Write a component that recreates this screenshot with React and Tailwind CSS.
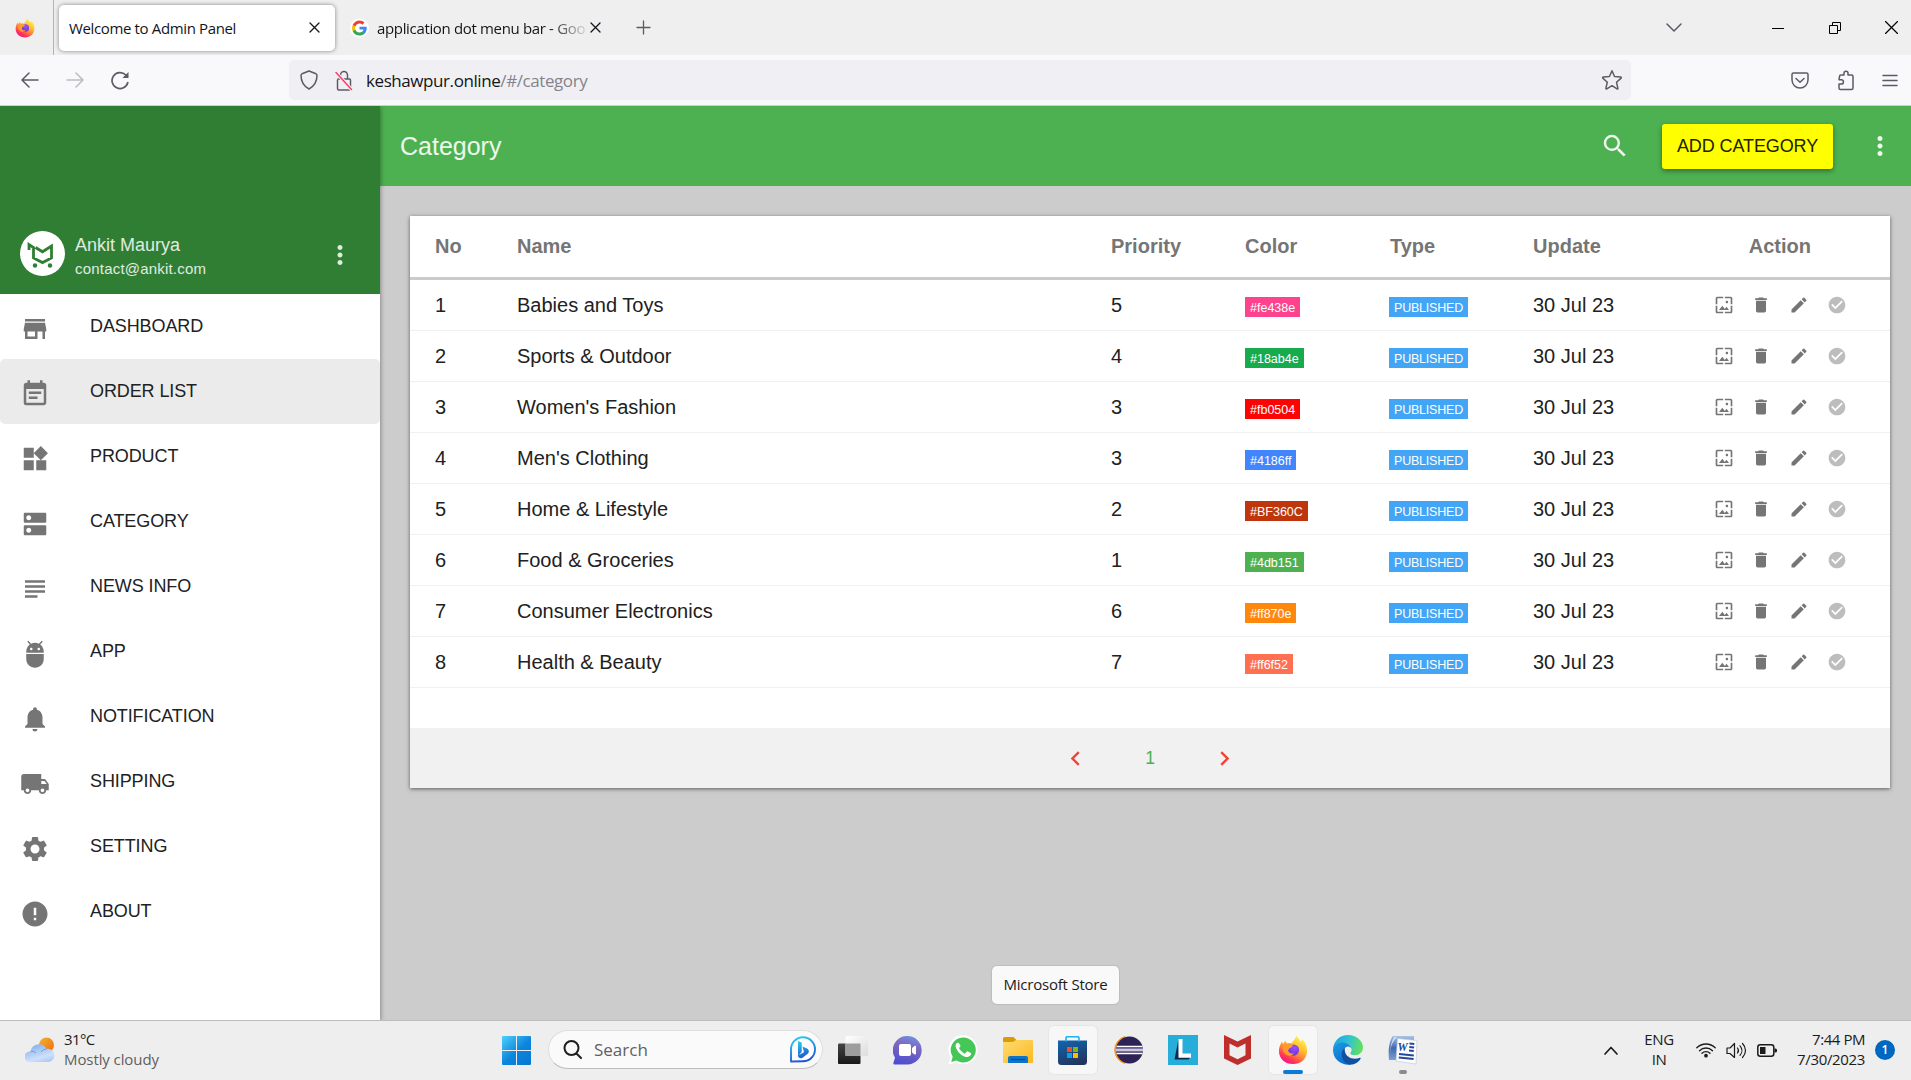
import React from "react";
import {
  MdStore, MdEventNote, MdWidgets, MdDns, MdSubject, MdAdb, MdNotifications,
  MdLocalShipping, MdSettings, MdError, MdWallpaper, MdDelete, MdEdit,
  MdCheckCircle, MdSearch, MdMoreVert, MdChevronLeft, MdChevronRight,
} from "react-icons/md";

const ui = "font-['Open_Sans','Noto_Sans',sans-serif]";

function FirefoxLogo({ size, id }) {
  return (
    <svg width={size} height={size} viewBox="0 0 32 32">
      <defs>
        <linearGradient id={id + "a"} x1="0.8" y1="0.05" x2="0.25" y2="1">
          <stop offset="0" stopColor="#fff44f" />
          <stop offset="0.35" stopColor="#ffc02e" />
          <stop offset="0.6" stopColor="#ff7a3a" />
          <stop offset="0.82" stopColor="#ff2f5e" />
          <stop offset="1" stopColor="#f0158f" />
        </linearGradient>
        <radialGradient id={id + "b"} cx="0.6" cy="0.3" r="0.8">
          <stop offset="0" stopColor="#a44bff" />
          <stop offset="1" stopColor="#5b36c9" />
        </radialGradient>
      </defs>
      <path fill={`url(#${id}a)`} d="M19.500 1c2.500 2 3.500 4 4.100 6 1.500-.5 2.200-1.500 2.400-2.500 3.500 3.500 5 8 5 12.500C31 25 24.500 31 16 31S1 25 1 17c0-4 1.500-7.500 3.500-10 .2 1.200.5 2 1 2.600C6.500 7.800 7.300 6.600 8 5.800c.3 1.400.9 2.400 2 3.100 1.500-.6 2.800-.5 4.200-.2C15.500 7 18.300 4.500 19.500 1z" />
      <circle cx="16.500" cy="16" r="6" fill={`url(#${id}b)`} />
      <path fill="#ff9a2c" d="M5.500 11c3-2.100 7.500-2 10 -.3.500 1.500-.5 2.500-3 3.300-.8.300-.8 1.500-1.800 2.300.3 2.500 3 4.200 6.300 3.200-1.500 3-6.500 3.500-9.500.5-2.500-2.500-3-6-2-9z" />
    </svg>
  );
}

function GoogleLogo() {
  return (
    <svg width="19" height="20" viewBox="0 0 24 24">
      <circle cx="12" cy="12" r="12" fill="#fff" />
      <g transform="translate(1.700 1.700) scale(0.86)">
        <path fill="#4285F4" d="M22.560 12.250c0-.78-.07-1.530-.2-2.250H12v4.260h5.920c-.26 1.370-1.040 2.530-2.210 3.310v2.770h3.570c2.080-1.920 3.280-4.740 3.280-8.090z" />
        <path fill="#34A853" d="M12 23c2.970 0 5.460-.98 7.280-2.660l-3.570-2.770c-.98.66-2.230 1.060-3.710 1.060-2.860 0-5.290-1.930-6.160-4.530H2.180v2.840C3.990 20.530 7.700 23 12 23z" />
        <path fill="#FBBC05" d="M5.840 14.090c-.22-.66-.35-1.360-.35-2.090s.13-1.430.35-2.090V7.070H2.180C1.430 8.550 1 10.220 1 12s.43 3.450 1.180 4.930l3.660-2.840z" />
        <path fill="#EA4335" d="M12 5.380c1.620 0 3.060.56 4.210 1.640l3.150-3.150C17.450 2.090 14.970 1 12 1 7.700 1 3.990 3.470 2.180 7.070l3.660 2.840c.87-2.600 3.300-4.530 6.160-4.530z" />
      </g>
    </svg>
  );
}

function Line({ w = 20, h = 20, box, d, color = "#5b5b66", sw = 1.5, className = "" }) {
  return (
    <svg width={w} height={h} viewBox={box || `0 0 ${w} ${h}`} fill="none" stroke={color} strokeWidth={sw} strokeLinecap="round" strokeLinejoin="round" className={`shrink-0 ${className}`}>
      <path d={d} />
    </svg>
  );
}

const Close = () => <Line w={11} h={11} d="M1 1l9 9M10 1l-9 9" color="#15141a" sw={1.300} />;

function TabBar() {
  return (
    <div className={`flex h-[55px] items-center bg-[#efefef] text-[15px] text-[#15141a] ${ui}`}>
      <div className="flex h-full w-[54px] shrink-0 items-center border-r border-[#b4b4b4] pl-[15px]">
        <FirefoxLogo size={20} id="tab" />
      </div>
      <div className="ml-[5px] flex h-[46px] w-[276px] shrink-0 items-center justify-between rounded-[5px] bg-white pl-[10px] pr-[15px] shadow-[0_0_4px_rgba(0,0,0,0.45)]">
        <span className="whitespace-nowrap pt-[2px] tracking-[-0.360px]">Welcome to Admin Panel</span>
        <Close />
      </div>
      <div className="ml-[15px] flex items-center">
        <GoogleLogo />
        <span className="ml-[8px] w-[211px] whitespace-nowrap pt-[2px] tracking-[-0.340px] [mask-image:linear-gradient(to_right,#000_82%,transparent_101%)]">application dot menu bar - Goo</span>
        <span className="ml-[2px]"><Close /></span>
      </div>
      <Line w={15} h={15} d="M7.500 1v13M1 7.500h13" className="ml-[35px]" sw={1.300} />
      <div className="ml-auto flex items-center pr-[13px]">
        <Line w={16} h={10} d="M1 1l7 7 7-7" className="mr-[90px]" />
        <Line w={12} h={12} d="M0 6.500h12" color="#000" sw={1} className="mr-[45px]" />
        <svg width="12" height="12" fill="none" stroke="#000" className="mr-[44px]">
          <path d="M.5 3.500h8v8h-8zM3.500 3.500v-3h8v8h-3" />
        </svg>
        <Line w={13} h={13} d="M.5.5l12 12M12.500.5l-12 12" color="#000" sw={1.200} />
      </div>
    </div>
  );
}

function NavBar() {
  return (
    <div className={`flex h-[51px] items-center border-b border-[#cfcfd3] bg-[#f9f9fb] ${ui}`}>
      <Line w={18} h={16} d="M17 8H1.500M8 1L1 8l7 7" className="ml-[21px]" />
      <Line w={18} h={16} d="M1 8h15.500M10 1l7 7-7 7" color="#bcbcc2" className="ml-[27px]" />
      <svg width="18" height="19" viewBox="0 0 18 19" fill="none" stroke="#5b5b66" strokeWidth="1.700" strokeLinecap="round" className="ml-[27px]">
        <path d="M16.800 11.500A8 8 0 1 1 14.800 4" />
        <path d="M17.500 1v6h-6z" fill="#5b5b66" stroke="none" />
      </svg>
      <div className="ml-[160px] flex h-10 w-[1342px] items-center rounded-[5px] bg-[#f0f0f4] pl-[11px] pr-[8px]">
        <Line w={18} h={20} d="M9 1l7 2.800c.6.300 1 .8 1 1.500 0 6-2 10.500-8 13.700-6-3.200-8-7.700-8-13.700 0-.7.400-1.200 1-1.500z" />
        <svg width="18" height="21" viewBox="0 0 18 21" fill="none" stroke="#5b5b66" strokeWidth="1.500" strokeLinecap="round" className="ml-[17px]">
          <path d="M5.500 9V5a3.500 3.500 0 0 1 7 0v4M3 9h11.500a1 1 0 0 1 1 1v9a1 1 0 0 1-1 1H4a1.500 1.500 0 0 1-1.500-1.500V10" />
          <path d="M1 2.500l15.500 17" stroke="#f0f0f4" strokeWidth="3.400" />
          <path d="M1 2.500l15.500 17" stroke="#ff3b6b" />
        </svg>
        <span className="ml-[13px] whitespace-nowrap pt-[2px] text-[17px] tracking-[-0.420px] text-[#15141a]">
          keshawpur.online<span className="text-[#84838c]">/#/category</span>
        </span>
        <Line w={22} h={22} d="M11 1.800l2.500 5.700 6.200.6c.6.100.8.600.4 1l-4.600 4.100 1.400 6.100c.1.500-.4.900-.9.600L11 16.700l-5.200 3.200c-.4.300-1-.1-.9-.6l1.400-6.100L1.800 9.100c-.4-.4-.2-1 .4-1l6.200-.6z" className="ml-auto" />
      </div>
      <div className="ml-auto flex items-center gap-[27.500px] pr-[13px]">
        <Line w={18} h={17} d="M2.500 1h13A1.500 1.500 0 0 1 17 2.500V8a8 8 0 0 1-16 0V2.500A1.500 1.500 0 0 1 2.500 1zM5 6.500l4 3.800 4-3.800" />
        <Line w={18} h={21} d="M2.500 7V6.500A1.500 1.500 0 0 1 4 5h3V3.200a2 2 0 0 1 4 0V5h3.500A1.500 1.500 0 0 1 16 6.500V18a1.500 1.500 0 0 1-1.500 1.500H3.500A1.500 1.500 0 0 1 2 18v-4h2.300a2.100 2.100 0 0 0 0-4.200H2z" />
        <Line w={16} h={13} d="M1 1.500h14M1 6.500h14M1 11.500h14" />
      </div>
    </div>
  );
}

const menu = [
  ["DASHBOARD", MdStore], ["ORDER LIST", MdEventNote], ["PRODUCT", MdWidgets],
  ["CATEGORY", MdDns], ["NEWS INFO", MdSubject], ["APP", MdAdb],
  ["NOTIFICATION", MdNotifications], ["SHIPPING", MdLocalShipping],
  ["SETTING", MdSettings], ["ABOUT", MdError],
];

function Sidebar() {
  return (
    <aside className="relative z-10 w-[380px] shrink-0 bg-white shadow-[0_1px_5px_rgba(0,0,0,0.45)]">
      <div className="flex h-[188px] items-end bg-[#2f7e33] pb-[13px] pl-5 text-white/85">
        <svg width="45" height="45" viewBox="0 0 45 45" className="mb-[5px]">
          <circle cx="22.500" cy="22.500" r="22.500" fill="#fff" />
          <g fill="none" stroke="#2f7e33" strokeWidth="2.800">
            <path d="M9 19v-5.500l4.500 3v10.500l9 4.600 9-4.600V15l-9 5.800-7-4.300" />
          </g>
          <circle cx="15" cy="34.500" r="2.200" fill="#2f7e33" />
          <circle cx="30" cy="34.500" r="2.200" fill="#2f7e33" />
        </svg>
        <div className="ml-[10px] flex flex-col">
          <span className="text-[18px] leading-6">Ankit Maurya</span>
          <span className="text-[15px] leading-6 tracking-[0.200px]">contact@ankit.com</span>
        </div>
        <MdMoreVert size={30} className="mb-[11px] ml-auto mr-[25px]" />
      </div>
      <nav>
        {menu.map(([label, Icon]) => (
          <div key={label} className={label === "ORDER LIST" ? "flex h-[65px] items-center rounded-[5px] bg-[#ebebeb] pl-5" : "flex h-[65px] items-center pl-5"}>
            <Icon size={30} color="#757575" className="relative top-[2.500px]" />
            <span className="ml-10 text-[18px] tracking-[-0.100px] text-[#212121]">{label}</span>
          </div>
        ))}
      </nav>
    </aside>
  );
}

const rows = [
  ["Babies and Toys", 5, "#fe438e", "bg-[#fe438e]"],
  ["Sports & Outdoor", 4, "#18ab4e", "bg-[#18ab4e]"],
  ["Women's Fashion", 3, "#fb0504", "bg-[#fb0504]"],
  ["Men's Clothing", 3, "#4186ff", "bg-[#4186ff]"],
  ["Home & Lifestyle", 2, "#BF360C", "bg-[#BF360C]"],
  ["Food & Groceries", 1, "#4db151", "bg-[#4db151]"],
  ["Consumer Electronics", 6, "#ff870e", "bg-[#ff870e]"],
  ["Health & Beauty", 7, "#ff6f52", "bg-[#ff6f52]"],
];
const cols = "grid grid-cols-[82px_594px_134px_145px_143px_1fr] items-center pl-[25px]";

function Badge({ children, className }) {
  return <span className={`inline-flex h-5 items-center px-[5px] pt-[3px] text-[12.500px] leading-none text-white ${className}`}>{children}</span>;
}

function CategoryTable() {
  return (
    <section className="ml-[30px] mt-[30px] w-[1480px] bg-white text-[20px] text-[#212121] shadow-[0_1px_4px_rgba(0,0,0,0.55)]">
      <div className={`${cols} h-16 border-b-[3px] border-[#cbcbcb] pb-[2px] font-bold text-[#757575]`}>
        <span>No</span><span>Name</span><span>Priority</span><span>Color</span><span>Type</span>
        <div className="flex"><span>Update</span><span className="ml-[148px]">Action</span></div>
      </div>
      {rows.map(([name, priority, color, bg], i) => (
        <div key={name} className={`${cols} h-[51px] border-b border-[#f1f1f1]`}>
          <span>{i + 1}</span><span>{name}</span><span>{priority}</span>
          <div className="flex pt-[4px]"><Badge className={bg}>{color}</Badge></div>
          <div className="-ml-px flex pt-[4px]"><Badge className="bg-[#42a5f5] tracking-[-0.210px]">PUBLISHED</Badge></div>
          <div className="flex items-center">
            <span className="whitespace-nowrap">30 Jul 23</span>
            <div className="ml-auto mr-[43.500px] flex gap-[17.600px] text-[#757575]">
              <MdWallpaper size={20} /><MdDelete size={20} /><MdEdit size={20} /><MdCheckCircle size={20} color="#bdbdbd" />
            </div>
          </div>
        </div>
      ))}
      <div className="h-10" />
      <div className="flex h-[60px] items-center justify-center bg-[#f1f1f1] text-[17.500px]">
        <MdChevronLeft size={29} color="#f44336" />
        <span className="mx-[55px] text-[#4caf50]">1</span>
        <MdChevronRight size={29} color="#f44336" />
      </div>
    </section>
  );
}

function TaskCell({ children, active, mark }) {
  return (
    <div className="flex w-[55px] justify-center">
      <div className={active ? "relative flex size-12 items-center justify-center rounded-[5px] bg-[#f7f7f7] shadow-[0_0_1px_1px_#e6e6e6]" : "relative flex size-12 items-center justify-center"}>
        {children}
        {mark && <span className={`absolute bottom-0 h-1 rounded-full ${mark}`} />}
      </div>
    </div>
  );
}

function Taskbar() {
  return (
    <footer className={`flex h-[60px] items-center border-t border-[#bdbdbd] bg-[#eeeeee] pb-px text-[15px] text-[#1b1b1b] ${ui}`}>
      <div className="flex w-[502px] items-center pl-[25px]">
        <svg width="30" height="26" viewBox="0 0 30 26">
          <defs>
            <linearGradient id="sun" x1="0" y1="0" x2="1" y2="1"><stop stopColor="#efb52e" /><stop offset="1" stopColor="#f26a12" /></linearGradient>
            <linearGradient id="cloud" x1="0.300" y1="0" x2="0.800" y2="1"><stop stopColor="#83b2f0" /><stop offset="0.700" stopColor="#cfe0fa" /><stop offset="1" stopColor="#a9c8f5" /></linearGradient>
          </defs>
          <circle cx="21.500" cy="8" r="7.500" fill="url(#sun)" />
          <path d="M5 25a5 5 0 0 1-.5-10.500h1A8.500 8.500 0 0 1 21.500 12 6.500 6.500 0 0 1 24 25z" fill="url(#cloud)" />
          <path d="M5.500 14.500c2-.5 4 0 5.500 1.500M16 15a6.500 6.500 0 0 1 5.500-3" fill="none" stroke="#6d9ee8" strokeWidth="1" />
        </svg>
        <div className="ml-[9px] flex flex-col pb-[3px] leading-5">
          <span className="tracking-[-0.600px]">31°C</span>
          <span className="tracking-[-0.090px] text-[#5f5f5f]">Mostly cloudy</span>
        </div>
      </div>
      <svg width="29" height="29" viewBox="0 0 29 29" className="mt-px">
        <defs><linearGradient id="win" x1="0" y1="0" x2="0.900" y2="1"><stop stopColor="#4fd0fb" /><stop offset="0.550" stopColor="#0c86dd" /><stop offset="1" stopColor="#0878d2" /></linearGradient></defs>
        <path fill="url(#win)" d="M0 1a1 1 0 0 1 1-1h13v14H0zM15 0h13a1 1 0 0 1 1 1v13H15zM0 15h14v14H1a1 1 0 0 1-1-1zM15 15h14v13a1 1 0 0 1-1 1H15z" />
      </svg>
      <div className="mb-px ml-[17px] flex h-[39px] w-[275px] items-center rounded-full border border-[#dedede] border-b-[#bdbdbd] bg-[#fafafa] pl-[14px] pr-[6px]">
        <Line w={19} h={19} d="M8.500 1a7 7 0 1 1 0 14a7 7 0 1 1 0-14M13.500 13.500l4.500 4.500" color="#1f1f1f" sw={2} />
        <span className="ml-[12px] text-[17px] text-[#616161]">Search</span>
        <svg width="27" height="27" viewBox="0 0 27 27" className="ml-auto">
          <defs><linearGradient id="bing" x1="0.300" y1="0" x2="0.600" y2="1"><stop stopColor="#28c8f0" /><stop offset="1" stopColor="#2350cf" /></linearGradient></defs>
          <path d="M2 25.500V13.500A12 12 0 1 1 14 25.300z" fill="#fff" stroke="url(#bing)" strokeWidth="1.900" strokeLinejoin="round" />
          <path fill="url(#bing)" d="M9 5l3.700 1.500V16l-3.700 4zM13.500 10.500l4.500 2c2 .9 2.500 3.500 1 5l-5.500 4.200c-1.800 1.300-4.500.3-4.500-2.200l6-3.300z" />
        </svg>
      </div>
      <div className="ml-[2px] flex items-center">
        <TaskCell>
          <svg width="30" height="28" viewBox="0 0 30 28">
            <defs>
              <linearGradient id="tv1" x1="0" y1="0" x2="0" y2="1"><stop stopColor="#444" /><stop offset="1" stopColor="#181818" /></linearGradient>
              <linearGradient id="tv2" x1="0" y1="0" x2="1" y2="1"><stop stopColor="#fff" /><stop offset="1" stopColor="#dcdcdc" /></linearGradient>
            </defs>
            <rect y="7.500" width="22.500" height="20.500" rx="1" fill="url(#tv1)" />
            <rect x="7.500" width="22.500" height="20" rx="1" fill="url(#tv2)" />
            <path d="M7.500 7.500h15V20h-15z" fill="#9d9d9d" />
          </svg>
        </TaskCell>
        <TaskCell>
          <svg width="29" height="29" viewBox="0 0 29 29">
            <defs><linearGradient id="chat" x1="0.800" y1="0" x2="0.500" y2="1"><stop stopColor="#6f93e8" /><stop offset="0.400" stopColor="#7f68bd" /><stop offset="1" stopColor="#4f50d0" /></linearGradient></defs>
            <path d="M14.500 0a14.200 14.200 0 0 1 0 28.400H2c-1.500 0-2-1-1.400-2.200l1.400-4.500A14.200 14.200 0 0 1 14.500 0z" fill="url(#chat)" />
            <rect x="6" y="8" width="12" height="12" rx="2" fill="#fff" />
            <path d="M19 12l2.500-2c.6-.4 1.500 0 1.500.8v6.800c0 .8-.9 1.200-1.500.8l-2.500-2z" fill="#fff" />
          </svg>
        </TaskCell>
        <TaskCell>
          <svg width="30" height="30" viewBox="0 0 30 30">
            <path d="M15 .3A14.500 14.500 0 1 1 8 27.500L.5 29.700l2-7.400A14.500 14.500 0 0 1 15 .3z" fill="#fff" />
            <path d="M15 2.500a12.500 12.500 0 1 1-6.500 23L3.200 27l1.500-5.300A12.500 12.500 0 0 1 15 2.500z" fill="#45c757" />
            <path transform="translate(0.500 0)" fill="#fff" d="M10.700 8.500c-.4-.8-1-.8-1.500-.7-3 1.400-2.300 4.600-.5 7.400 2.500 3.900 6.500 7 10.400 6.800 1.900-.2 3.600-1.500 3.500-3.400 0-.4-.3-.6-.6-.8l-2.800-1.400c-.5-.2-.8 0-1.100.4l-1.200 1.500c-.3.300-.6.300-1 .1-2.200-1-4-2.700-5.200-4.800-.2-.4-.1-.6.1-.9l1-1.200c.2-.3.200-.6.100-.9z" />
          </svg>
        </TaskCell>
        <TaskCell>
          <svg width="30" height="27" viewBox="0 0 30 27">
            <defs><linearGradient id="fold" x1="0" y1="0" x2="1" y2="1"><stop stopColor="#ffdc72" /><stop offset="1" stopColor="#fbb91e" /></linearGradient></defs>
            <path d="M0 1.500A1.500 1.500 0 0 1 1.500 0h8c1 0 1.500.4 2 1l2 2V8H0z" fill="#dd9a06" />
            <path d="M0 5h10l3-2h16a1 1 0 0 1 1 1v21a1 1 0 0 1-1 1H1a1 1 0 0 1-1-1z" fill="url(#fold)" />
            <path d="M5 26v-5a2 2 0 0 1 2-2h16a2 2 0 0 1 2 2v5z" fill="#0b75c9" />
            <path d="M8 22.500h14" stroke="#06488f" strokeWidth="1.200" />
          </svg>
        </TaskCell>
        <TaskCell active>
          <svg width="29" height="29" viewBox="0 0 29 29">
            <defs><linearGradient id="store" x1="0.200" y1="0" x2="0.600" y2="1"><stop stopColor="#0f63ae" /><stop offset="1" stopColor="#24355c" /></linearGradient></defs>
            <path d="M0 4.500h29v21a3.500 3.500 0 0 1-3.500 3.500h-22A3.500 3.500 0 0 1 0 25.500z" fill="url(#store)" />
            <path d="M8 5.500V2a1.300 1.300 0 0 1 1.300-1.300h10.400A1.300 1.300 0 0 1 21 2v3.500" fill="none" stroke="#1db2f2" strokeWidth="1.600" />
            <path d="M9 11h5v5H9z" fill="#f25022" /><path d="M15 11h5v5h-5z" fill="#7fba00" />
            <path d="M9 17h5v5H9z" fill="#00a4ef" /><path d="M15 17h5v5h-5z" fill="#ffb900" />
          </svg>
        </TaskCell>
        <TaskCell>
          <svg width="30" height="28" viewBox="0 0 30 28">
            <path d="M12 .5A14 14 0 0 0 12 27.500a18 18 0 0 1 0-27z" fill="#f7941e" stroke="#f7941e" />
            <circle cx="16.500" cy="14" r="13.500" fill="#2c2255" />
            <path d="M3.500 10.500h26M3 14h27M3.500 17.500h26" stroke="#fff" strokeWidth="1.700" />
            <path d="M3 12.300h27M3 15.800h27" stroke="#8f86b8" strokeWidth="1" />
          </svg>
        </TaskCell>
        <TaskCell>
          <svg width="30" height="30" viewBox="0 0 30 30">
            <path d="M0 0h30v30H0z" fill="#27add9" />
            <path d="M10.500 4L6.500 24.500h14l2-2.500H11z" fill="#0b2c4e" />
            <path d="M10.500 4h4v14.500H23v4.200H10.500z" fill="#fff" />
          </svg>
        </TaskCell>
        <TaskCell>
          <svg width="27" height="30" viewBox="0 0 27 30">
            <path d="M0 0l13.500 6.500L27 0v23.500L13.500 30 0 23.500zM5.500 8.500v11.700l8 4 8-4V8.500l-8 4z" fill="#c02e2c" fillRule="evenodd" />
          </svg>
        </TaskCell>
        <TaskCell active mark="w-5 bg-[#0a7bd6]"><FirefoxLogo size={30} id="task" /></TaskCell>
        <TaskCell>
          <svg width="30" height="30" viewBox="0 0 30 30">
            <defs>
              <linearGradient id="e1" x1="0" y1="0.300" x2="1" y2="0.500"><stop stopColor="#1ea0e2" /><stop offset="0.500" stopColor="#2fc4cf" /><stop offset="1" stopColor="#66e05a" /></linearGradient>
              <linearGradient id="e2" x1="0" y1="0" x2="0.500" y2="1"><stop stopColor="#1b9de2" /><stop offset="1" stopColor="#0c6ccf" /></linearGradient>
            </defs>
            <path d="M0 14.500C.3 6 7 0 15 0c8.500 0 15 6 15 12.500 0 4.500-3.500 7.700-8 7.700-3 0-4.700-1-4.700-2 0-.8 1.300-1.300 1.300-3.500C18.500 10.500 14.500 8 10 8 4.500 8 1 11 0 14.500z" fill="url(#e1)" />
            <path d="M0 15C.3 10.500 5 7 10 7.500c4.500.4 8 3 8.500 6.500-.5-1.500-2-2.500-3.500-2.500-3 .5-5 3-5 6.500 0 5.500 4 9.500 8.500 11.500C8.500 31 0 24.500 0 15z" fill="url(#e2)" />
            <path d="M11.800 12.800c-5.500 4.500-3.300 13.500 3.500 16.500 5 1.200 10-1.500 12.400-5.800.3-.6-.2-1-.8-.8-6.500 3-14.500-.5-15.100-6.900z" fill="#10519f" />
          </svg>
        </TaskCell>
        <TaskCell mark="w-2 bg-[#8b8b8b]">
          <svg width="30" height="30" viewBox="0 0 30 30">
            <defs><linearGradient id="wd" x1="0" y1="0" x2="0" y2="1"><stop stopColor="#a9c4e6" /><stop offset="0.500" stopColor="#3f6bb0" /><stop offset="1" stopColor="#7d9fd2" /></linearGradient></defs>
            <path d="M1 25C0 16 1 8 4 2c.3-.7 1-1 2-1h20v24z" fill="url(#wd)" />
            <path d="M2 25C1.500 16 3 7 9 2H6.500c-4 6-5 14-4.500 23z" fill="#dbe6f6" />
            <path d="M9.500 3.500L29 5.500 28 29 8 26z" fill="#fdfdfe" stroke="#c3ccdc" strokeWidth=".7" />
            <path d="M21.500 8.500l4.800.5M21.300 12l4.800.5M21 15.500l4.800.5M11 19l14.800 1.500M10.800 22.500l14.800 1.500" stroke="#24479a" strokeWidth="2" />
            <text x="9.500" y="16" fontSize="11.500" fontWeight="700" fontStyle="italic" fontFamily="Liberation Serif" fill="#24479a">W</text>
          </svg>
        </TaskCell>
      </div>
      <div className="ml-auto flex items-center pr-4">
        <Line w={14} h={9} d="M1 8l6-6.500L13 8" color="#1b1b1b" sw={1.700} className="mr-[26px]" />
        <div className="flex w-[30px] flex-col items-center pb-[3px] leading-5 tracking-[-0.400px]"><span>ENG</span><span>IN</span></div>
        <svg width="20" height="16" viewBox="0 0 20 16" fill="none" stroke="#1b1b1b" strokeWidth="1.300" strokeLinecap="round" className="ml-[22px]">
          <path d="M.8 5.800a13 13 0 0 1 18.400 0M3.500 8.700a9.200 9.200 0 0 1 13 0M6 11.300a5.700 5.700 0 0 1 8 0" />
          <circle cx="10" cy="13.700" r="1.200" fill="#1b1b1b" />
        </svg>
        <svg width="21" height="17" viewBox="0 0 21 17" fill="none" stroke="#1b1b1b" strokeWidth="1.200" strokeLinecap="round" strokeLinejoin="round" className="ml-[10px]">
          <path d="M1 6h3l4.500-4.500v14L4 11.500H1zM11.500 6c1.200 1.500 1.200 3.500 0 5M14 3.800c2.500 2.800 2.500 6.800 0 9.600M16.500 1.500c4 4 4 10 0 14" />
        </svg>
        <svg width="20" height="13" viewBox="0 0 20 13" className="ml-[10px]">
          <rect x=".8" y=".8" width="16" height="11.400" rx="2.500" fill="none" stroke="#1b1b1b" strokeWidth="1.500" />
          <path d="M3 3h5.500v7H3zM17.500 4.500h1a1.500 1.500 0 0 1 1.500 1.500v1A1.500 1.500 0 0 1 18.500 8.500h-1z" fill="#1b1b1b" />
        </svg>
        <div className="ml-[18px] flex w-[70px] flex-col items-end pb-[3px] leading-5">
          <span className="tracking-[-0.450px]">7:44 PM</span><span className="tracking-[-0.350px]">7/30/2023</span>
        </div>
        <span className="ml-[10px] flex size-5 items-center justify-center rounded-full bg-[#0067c0] text-[12px] font-semibold text-white">1</span>
      </div>
    </footer>
  );
}

export default function App() {
  return (
    <div className="relative flex h-[1080px] w-[1911px] flex-col overflow-hidden bg-[#cccccc] font-['Liberation_Sans',Arial,sans-serif]">
      <TabBar />
      <NavBar />
      <div className="flex min-h-0 flex-1 overflow-hidden">
        <Sidebar />
        <main className="flex-1">
          <header className="flex h-20 items-center bg-[#4db151] pl-5 text-white/90">
            <h1 className="pt-[2px] text-[25px]">Category</h1>
            <MdSearch size={30} className="ml-auto" />
            <button className="ml-[32px] h-[45px] w-[171px] whitespace-nowrap rounded-[3px] bg-[#ffff00] text-[18px] tracking-[-0.100px] text-[#212100] shadow-[0_2px_5px_rgba(0,0,0,0.4)]">ADD CATEGORY</button>
            <MdMoreVert size={30} className="ml-8 mr-4" />
          </header>
          <CategoryTable />
        </main>
      </div>
      <Taskbar />
      <div className={`absolute left-[992px] top-[966px] flex h-[38px] w-[127px] items-center justify-center rounded-[5px] bg-[#f9f9f9] pb-[2px] text-[15px] text-[#1b1b1b] shadow-[0_0_1px_1px_#bdbdbd] ${ui}`}>
        <span className="whitespace-nowrap tracking-[-0.220px]">Microsoft Store</span>
      </div>
    </div>
  );
}
